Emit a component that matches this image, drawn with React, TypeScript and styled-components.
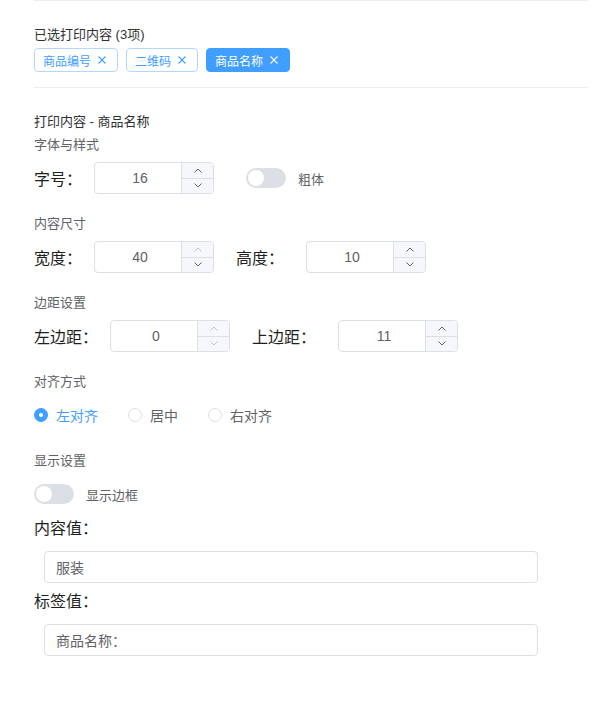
import React, { useState } from 'react';
import styled, { createGlobalStyle } from 'styled-components';

type Align = 'left' | 'center' | 'right';

const GlobalStyle = createGlobalStyle`
    html, body {
        margin: 0;
        padding: 0;
        background: #fff;
    }
    body {
        font-family: "Liberation Sans", "Noto Sans CJK SC", sans-serif;
    }
`;

const Chevron = ({ up }: { up?: boolean }) => (
    <svg width="8" height="5" viewBox="0 0 8 5" fill="none">
        <polyline
            points={up ? '0.5,4.5 4,1 7.5,4.5' : '0.5,0.5 4,4 7.5,0.5'}
            stroke="currentColor"
            strokeWidth="1"
        />
    </svg>
);

const CloseIcon = () => (
    <svg width="8" height="8" viewBox="0 0 8 8">
        <path d="M0.5 0.5 L7.5 7.5 M7.5 0.5 L0.5 7.5" stroke="currentColor" strokeWidth="1.1" />
    </svg>
);

interface NumberBoxProps {
    value: number;
    upOff?: boolean;
    downOff?: boolean;
}

const NumberBox = ({ value, upOff, downOff }: NumberBoxProps) => (
    <NumberWrap>
        <NumberValue>{value}</NumberValue>
        <Stepper>
            <StepButton $off={upOff}>
                <Chevron up />
            </StepButton>
            <StepButton $off={downOff}>
                <Chevron />
            </StepButton>
        </Stepper>
    </NumberWrap>
);

const App = () => {
    const [bold, setBold] = useState(false);
    const [border, setBorder] = useState(false);
    const [align, setAlign] = useState<Align>('left');

    const tags = [
        { name: '商品编号', active: false },
        { name: '二维码', active: false },
        { name: '商品名称', active: true },
    ];

    const aligns: { key: Align; label: string }[] = [
        { key: 'left', label: '左对齐' },
        { key: 'center', label: '居中' },
        { key: 'right', label: '右对齐' },
    ];

    return (
        <Page>
            <GlobalStyle />
            <Selected>
                <Heading>已选打印内容 (3项)</Heading>
                <TagList>
                    {tags.map((t) => (
                        <Tag key={t.name} $active={t.active}>
                            {t.name}
                            <TagClose>
                                <CloseIcon />
                            </TagClose>
                        </Tag>
                    ))}
                </TagList>
            </Selected>

            <Editor>
                <Heading>打印内容 - 商品名称</Heading>

                <Group>
                    <SubTitle>字体与样式</SubTitle>
                    <Row>
                        <FieldLabel>字号：</FieldLabel>
                        <NumberBox value={16} />
                        <Toggle $on={bold} $offset={32} onClick={() => setBold(!bold)}>
                            <Knob $on={bold} />
                        </Toggle>
                        <ToggleText>粗体</ToggleText>
                    </Row>
                </Group>

                <Group>
                    <SubTitle>内容尺寸</SubTitle>
                    <Row>
                        <FieldLabel>宽度：</FieldLabel>
                        <NumberBox value={40} upOff />
                        <FieldLabel $wide $lead>高度：</FieldLabel>
                        <NumberBox value={10} />
                    </Row>
                </Group>

                <Group>
                    <SubTitle>边距设置</SubTitle>
                    <Row>
                        <FieldLabel>左边距：</FieldLabel>
                        <NumberBox value={0} upOff downOff />
                        <FieldLabel $wide $lead>上边距：</FieldLabel>
                        <NumberBox value={11} />
                    </Row>
                </Group>

                <Group>
                    <SubTitle>对齐方式</SubTitle>
                    <Row>
                        {aligns.map((a) => (
                            <RadioItem key={a.key} onClick={() => setAlign(a.key)}>
                                <RadioDot $checked={align === a.key} />
                                <RadioText $checked={align === a.key}>{a.label}</RadioText>
                            </RadioItem>
                        ))}
                    </Row>
                </Group>

                <Group>
                    <SubTitle>显示设置</SubTitle>
                    <Row>
                        <Toggle $on={border} onClick={() => setBorder(!border)}>
                            <Knob $on={border} />
                        </Toggle>
                        <ToggleText>显示边框</ToggleText>
                    </Row>
                </Group>

                <ValueLabel>内容值：</ValueLabel>
                <TextBox defaultValue="服装" />
                <ValueLabel>标签值：</ValueLabel>
                <TextBox defaultValue="商品名称：" />
            </Editor>
        </Page>
    );
};

export default App;

const Page = styled.div`
    padding: 0 6px 40px 34px;
`;

const Selected = styled.section`
    border-top: 1px solid #ebeef5;
    border-bottom: 1px solid #ebeef5;
    padding: 24px 0 15px;
`;

const Heading = styled.div`
    font-size: 13px;
    line-height: 20px;
    color: #303133;
    margin-bottom: 3px;
`;

const TagList = styled.div`
    display: flex;
    gap: 8px;
`;

const Tag = styled.span<{ $active?: boolean }>`
    display: inline-flex;
    align-items: center;
    box-sizing: border-box;
    height: 24px;
    padding: 0 8px;
    font-size: 12px;
    border-radius: 4px;
    border: 1px solid ${(p) => (p.$active ? '#409eff' : '#b3d8ff')};
    background: ${(p) => (p.$active ? '#409eff' : '#fff')};
    color: ${(p) => (p.$active ? '#fff' : '#409eff')};
`;

const TagClose = styled.span`
    display: inline-flex;
    align-items: center;
    justify-content: center;
    width: 14px;
    height: 14px;
    margin-left: 4px;
`;

const Editor = styled.section`
    padding-top: 24px;
`;

const Group = styled.div`
    & + & {
        margin-top: 20px;
    }
`;

const SubTitle = styled.div`
    font-size: 13px;
    line-height: 20px;
    color: #606266;
    margin-bottom: 7px;
`;

const Row = styled.div`
    display: flex;
    align-items: center;
    height: 32px;
`;

const FieldLabel = styled.span<{ $wide?: boolean; $lead?: boolean }>`
    font-size: 16px;
    color: #1f1f1f;
    margin-left: ${(p) => (p.$lead ? '22px' : '0')};
    margin-right: ${(p) => (p.$wide ? '22px' : '12px')};
    white-space: nowrap;
`;

const NumberWrap = styled.div`
    display: flex;
    box-sizing: border-box;
    width: 120px;
    height: 32px;
    border: 1px solid #dcdfe6;
    border-radius: 4px;
    overflow: hidden;
    background: #fff;
`;

const NumberValue = styled.span`
    flex: 1;
    display: flex;
    align-items: center;
    justify-content: center;
    padding-left: 4px;
    font-size: 14px;
    color: #606266;
`;

const Stepper = styled.div`
    display: flex;
    flex-direction: column;
    width: 31px;
    border-left: 1px solid #dcdfe6;
    background: #f5f7fa;
`;

const StepButton = styled.span<{ $off?: boolean }>`
    flex: 1;
    display: flex;
    align-items: center;
    justify-content: center;
    color: ${(p) => (p.$off ? '#c0c4cc' : '#606266')};

    & + & {
        border-top: 1px solid #dcdfe6;
    }
`;

const Toggle = styled.span<{ $on?: boolean; $offset?: number }>`
    position: relative;
    display: inline-block;
    box-sizing: border-box;
    width: 40px;
    height: 20px;
    border-radius: 10px;
    margin-left: ${(p) => p.$offset ?? 0}px;
    background: ${(p) => (p.$on ? '#409eff' : '#dcdfe6')};
    cursor: pointer;
`;

const Knob = styled.span<{ $on?: boolean }>`
    position: absolute;
    top: 2px;
    left: ${(p) => (p.$on ? '22px' : '2px')};
    width: 16px;
    height: 16px;
    border-radius: 50%;
    background: #fff;
    transition: left 0.2s;
`;

const ToggleText = styled.span`
    margin-left: 12px;
    font-size: 13px;
    color: #606266;
`;

const RadioItem = styled.label`
    display: inline-flex;
    align-items: center;
    margin-right: 30px;
    cursor: pointer;
`;

const RadioDot = styled.span<{ $checked?: boolean }>`
    box-sizing: border-box;
    width: 14px;
    height: 14px;
    border-radius: 50%;
    border: 1px solid ${(p) => (p.$checked ? '#409eff' : '#dcdfe6')};
    background: ${(p) => (p.$checked ? '#409eff' : '#fff')};
    display: flex;
    align-items: center;
    justify-content: center;

    &::after {
        content: '';
        width: 4px;
        height: 4px;
        border-radius: 50%;
        background: #fff;
        display: ${(p) => (p.$checked ? 'block' : 'none')};
    }
`;

const RadioText = styled.span<{ $checked?: boolean }>`
    margin-left: 8px;
    font-size: 14px;
    color: ${(p) => (p.$checked ? '#409eff' : '#606266')};
`;

const ValueLabel = styled.div`
    margin-top: 8px;
    font-size: 16px;
    line-height: 22px;
    color: #1f1f1f;
`;

const TextBox = styled.input`
    display: block;
    box-sizing: border-box;
    width: 494px;
    height: 32px;
    margin: 11px 0 0 10px;
    padding: 0 11px;
    border: 1px solid #dcdfe6;
    border-radius: 4px;
    font-family: inherit;
    font-size: 14px;
    color: #606266;
    outline: none;
`;
